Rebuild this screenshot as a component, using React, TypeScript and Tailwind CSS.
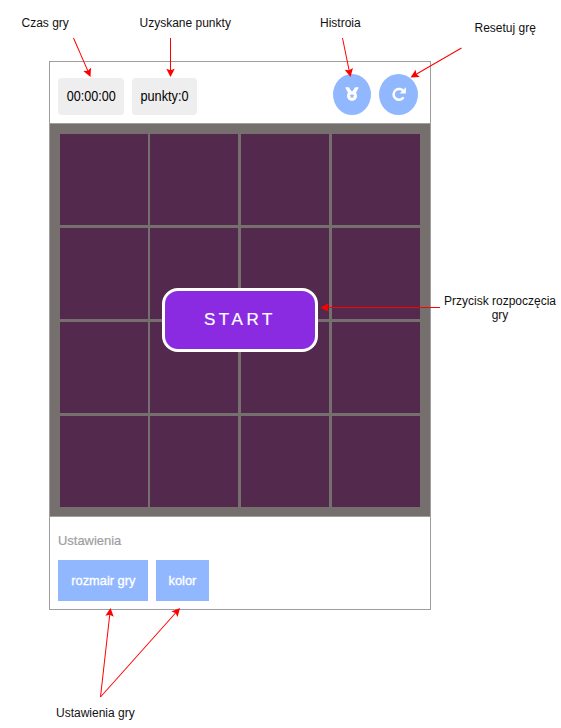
type LabelProps = { className: string; text: string };

function Label({ className, text }: LabelProps) {
  return <div className={`absolute whitespace-nowrap text-[12px] leading-[14px] text-[#111111] ${className}`}>{text}</div>;
}

type ArrowProps = { x1: number; y1: number; x2: number; y2: number };

function Arrow({ x1, y1, x2, y2 }: ArrowProps) {
  const angle = (Math.atan2(y2 - y1, x2 - x1) * 180) / Math.PI;
  const length = Math.hypot(x2 - x1, y2 - y1);
  return (
    <g transform={`translate(${x2} ${y2}) rotate(${angle})`}>
      <path d={`M${-length} 0H-5`} stroke="#ff0000" fill="none" />
      <path d="M0 0L-8.3 -4.2L-6.8 0L-8.3 4.2Z" fill="#ff0000" />
    </g>
  );
}

function MedalIcon() {
  return (
    <svg className="h-[14px] w-[14px]" viewBox="0 0 14 14" fill="currentColor">
      <path d="M0.2 0.3H3.9L6.4 4.2L3.3 6.4Z" />
      <path d="M13.8 0.3H10.1L7.6 4.2L10.7 6.4Z" />
      <path
        fillRule="evenodd"
        d="M7 3.9a5 5 0 1 0 0 10a5 5 0 1 0 0-10ZM7 6.6l.7 1.5 1.7.2-1.2 1.1.3 1.7L7 10.3l-1.5.8.3-1.7-1.2-1.1 1.7-.2Z"
      />
    </svg>
  );
}

function RedoIcon() {
  return (
    <svg className="h-[14px] w-[14px]" viewBox="0 0 14 14">
      <path d="M11.4 4.2A5.4 5.4 0 1 0 10.8 11.2" fill="none" stroke="currentColor" strokeWidth="2.5" strokeLinecap="round" />
      <path d="M13.9 0.2V6.4H7.7Z" fill="currentColor" />
    </svg>
  );
}

export default function App() {
  const cells = Array.from({ length: 16 }, (_, i) => i);
  return (
    <div className="relative h-[728px] w-[561px] overflow-hidden bg-white pl-[49px] pt-[61px] font-['Liberation_Sans',Arial,sans-serif]">
      <main className="flex h-[549px] w-[382px] flex-col border border-[#9e9e9e] bg-white">
        <header className="flex h-[62px] items-center justify-between border-b border-[#9e9e9e] px-2">
          <div className="mt-[8px] flex gap-2">
            <div className="flex h-[37px] w-[66px] items-center justify-center rounded-[4px] bg-[#eeeeee] text-[14px] text-black">
              <span className="block scale-x-[0.9] whitespace-nowrap">00:00:00</span>
            </div>
            <div className="flex h-[37px] w-[65px] items-center justify-center rounded-[4px] bg-[#eeeeee] text-[14px] text-black">
              <span className="block scale-x-[0.91] whitespace-nowrap">punkty:0</span>
            </div>
          </div>
          <div className="mr-1 mt-[3px] flex gap-2">
            <button className="flex h-[41px] w-[38px] items-center justify-center rounded-[50%] bg-[#91b8ff] text-white">
              <MedalIcon />
            </button>
            <button className="flex h-[41px] w-[39px] items-center justify-center rounded-[50%] bg-[#91b8ff] text-white">
              <RedoIcon />
            </button>
          </div>
        </header>
        <section className="relative h-[393px] border-b border-[#9e9e9e] bg-[#75706e] pb-[9px] pl-[9.6px] pr-[10.2px] pt-[10px]">
          <div className="grid h-[373px] grid-cols-4 grid-rows-4 gap-x-[2.6px] gap-y-[3px]">
            {cells.map((cell) => (
              <div key={cell} className="bg-[#53294d]" />
            ))}
          </div>
          <button className="absolute left-[112px] top-[164px] flex h-[64px] w-[156px] items-center justify-center rounded-[16px] border-[3px] border-white bg-[#8a2be2] text-[17px] tracking-[3.6px] text-white [-webkit-text-stroke:0.2px_white]">
            START
          </button>
        </section>
        <footer className="flex flex-1 flex-col px-2 pt-[16px]">
          <h2 className="h-[16px] text-[13.33px] leading-[16px] text-[#9e9e9e] [-webkit-text-stroke:0.2px_#9e9e9e]">
            <span className="inline-block origin-left scale-x-[0.97]">Ustawienia</span>
          </h2>
          <div className="mt-[11px] flex gap-2 text-[13.33px] text-white [-webkit-text-stroke:0.35px_white]">
            <button className="flex h-[41px] w-[90px] items-center justify-center bg-[#91b8ff]">
              <span className="block scale-x-[0.96] whitespace-nowrap">rozmair gry</span>
            </button>
            <button className="flex h-[41px] w-[53px] items-center justify-center bg-[#91b8ff]">
              <span className="block scale-x-[0.96] whitespace-nowrap">kolor</span>
            </button>
          </div>
        </footer>
      </main>
      <Label className="left-[21.5px] top-[16px]" text="Czas gry" />
      <Label className="left-[139.5px] top-[16px]" text="Uzyskane punkty" />
      <Label className="left-[320px] top-[16px]" text="Histroia" />
      <Label className="left-[474.5px] top-[21px]" text="Resetuj grę" />
      <div className="absolute left-[440px] top-[294px] w-[120px] text-center text-[12px] leading-[14px] text-[#111111]">
        Przycisk rozpoczęcia
        <br />
        gry
      </div>
      <Label className="left-[56px] top-[706px]" text="Ustawienia gry" />
      <svg className="pointer-events-none absolute left-0 top-0" width="561" height="728" viewBox="0 0 561 728">
        <Arrow x1={73.5} y1={38} x2={90.5} y2={77} />
        <Arrow x1={170.5} y1={38} x2={170.5} y2={77} />
        <Arrow x1={342.5} y1={38} x2={350.5} y2={77} />
        <Arrow x1={461.5} y1={48} x2={410.5} y2={77.5} />
        <Arrow x1={440} y1={307.5} x2={320.5} y2={307.5} />
        <Arrow x1={100.5} y1={697} x2={110.5} y2={608} />
        <Arrow x1={100.5} y1={697} x2={180} y2={608} />
      </svg>
    </div>
  );
}
